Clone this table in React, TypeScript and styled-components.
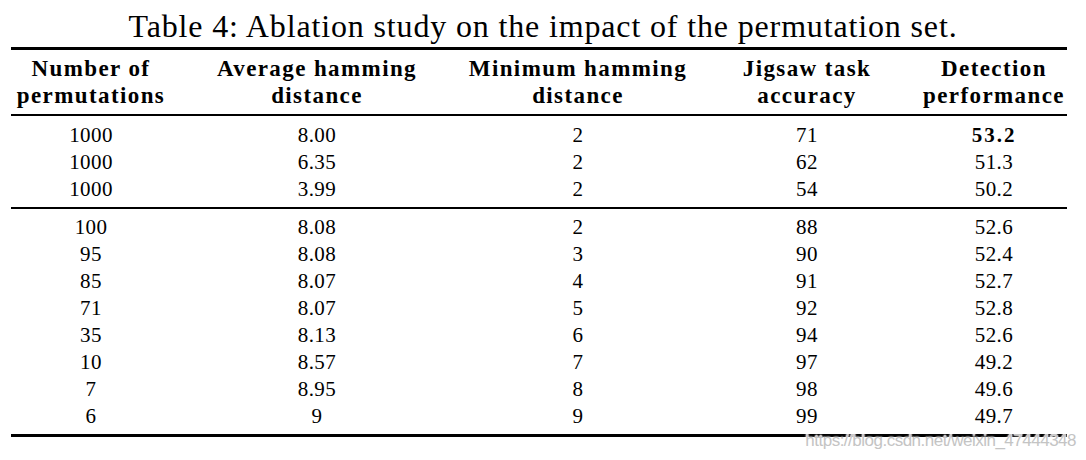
import styled, { createGlobalStyle } from "styled-components";

type RowData = { values: string[]; best?: number };

const columns = ["160px", "292px", "230px", "228px", "146px"];

const headers: [string, string][] = [
  ["Number of", "permutations"],
  ["Average hamming", "distance"],
  ["Minimum hamming", "distance"],
  ["Jigsaw task", "accuracy"],
  ["Detection", "performance"],
];

const groups: RowData[][] = [
  [
    { values: ["1000", "8.00", "2", "71", "53.2"], best: 4 },
    { values: ["1000", "6.35", "2", "62", "51.3"] },
    { values: ["1000", "3.99", "2", "54", "50.2"] },
  ],
  [
    { values: ["100", "8.08", "2", "88", "52.6"] },
    { values: ["95", "8.08", "3", "90", "52.4"] },
    { values: ["85", "8.07", "4", "91", "52.7"] },
    { values: ["71", "8.07", "5", "92", "52.8"] },
    { values: ["35", "8.13", "6", "94", "52.6"] },
    { values: ["10", "8.57", "7", "97", "49.2"] },
    { values: ["7", "8.95", "8", "98", "49.6"] },
    { values: ["6", "9", "9", "99", "49.7"] },
  ],
];

export default function App() {
  return (
    <Page>
      <GlobalStyle />
      <Caption>Table 4: Ablation study on the impact of the permutation set.</Caption>
      <Table>
        <Rule $thick />
        <HeaderRow>
          {headers.map(([a, b]) => (
            <HeadCell key={a + b}>
              <span>{a}</span>
              <span>{b}</span>
            </HeadCell>
          ))}
        </HeaderRow>
        <Rule />
        {groups.map((rows, gi) => (
          <div key={gi}>
            <Group $first={gi === 0}>
              {rows.map((row, ri) => (
                <Row key={ri}>
                  {row.values.map((v, ci) => (
                    <Cell key={ci} $bold={row.best === ci}>
                      {v}
                    </Cell>
                  ))}
                </Row>
              ))}
            </Group>
            <Rule $thick={gi === groups.length - 1} />
          </div>
        ))}
      </Table>
      <Watermark>https://blog.csdn.net/weixin_47444348</Watermark>
    </Page>
  );
}

const GlobalStyle = createGlobalStyle`
  html, body {
    margin: 0;
    padding: 0;
    background: #fff;
  }
  body {
    font-family: "Liberation Serif", "Times New Roman", serif;
    color: #000;
  }
`;

const Page = styled.div`
  position: relative;
  width: 1086px;
  height: 460px;
  overflow: hidden;
  background: #fff;
`;

const Caption = styled.div`
  padding-top: 8px;
  margin-bottom: 3px;
  height: 36px;
  line-height: 36px;
  font-size: 32px;
  letter-spacing: 0.85px;
  text-align: center;
  white-space: nowrap;
`;

const Table = styled.div`
  margin: 0 11px;
  width: 1056px;
`;

const Rule = styled.div<{ $thick?: boolean }>`
  height: ${(p) => (p.$thick ? "3px" : "2px")};
  background: #000;
`;

const HeaderRow = styled.div`
  display: grid;
  grid-template-columns: ${columns.join(" ")};
  padding: 5px 0;
`;

const HeadCell = styled.div`
  display: flex;
  flex-direction: column;
  align-items: center;
  font-size: 23px;
  font-weight: 700;
  line-height: 27px;
  letter-spacing: 1.4px;
  white-space: nowrap;
`;

const Group = styled.div<{ $first?: boolean }>`
  padding: ${(p) => (p.$first ? "6px" : "5px")} 0 4px;
`;

const Row = styled.div`
  display: grid;
  grid-template-columns: ${columns.join(" ")};
  height: 27px;
`;

const Cell = styled.div<{ $bold?: boolean }>`
  text-align: center;
  font-size: 21px;
  line-height: 27px;
  font-weight: ${(p) => (p.$bold ? 700 : 400)};
  letter-spacing: ${(p) => (p.$bold ? "2px" : "0.4px")};
`;

const Watermark = styled.div`
  position: absolute;
  right: 10px;
  top: 431px;
  font-family: "Liberation Sans", Arial, sans-serif;
  font-size: 17px;
  line-height: 20px;
  letter-spacing: -0.5px;
  color: #c4c4c4;
  text-shadow: 0 0 2px #fff, 0 0 2px #fff, 0 0 1px #fff;
  white-space: nowrap;
`;
